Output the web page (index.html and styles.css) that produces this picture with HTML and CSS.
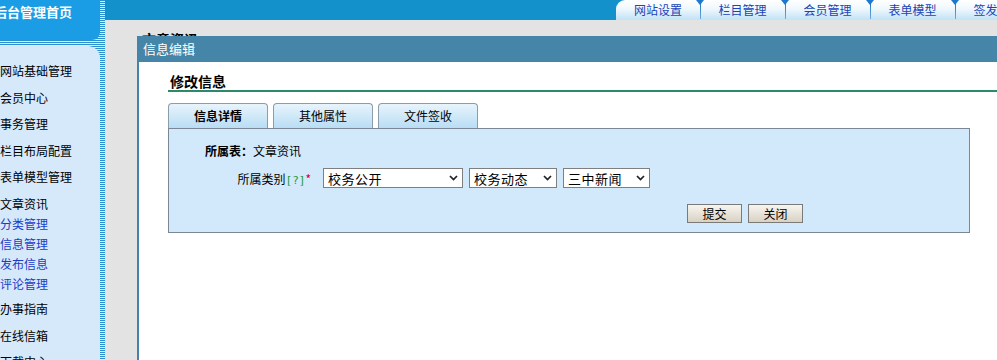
FILE: index.html
```html
<!DOCTYPE html>
<html lang="zh-CN">
<head>
    <meta charset="UTF-8">
    <title>信息编辑</title>
    <link rel="stylesheet" href="styles.css">
</head>
<body>
<div class="page">

    <!-- 左侧菜单 -->
    <aside class="side">
        <div class="side-head">后台管理首页</div>
        <ul class="side-menu">
            <li>网站基础管理</li>
            <li>会员中心</li>
            <li>事务管理</li>
            <li>栏目布局配置</li>
            <li>表单模型管理</li>
            <li>文章资讯
                <ul class="sub-menu">
                    <li><a href="#">分类管理</a></li>
                    <li><a href="#">信息管理</a></li>
                    <li><a href="#">发布信息</a></li>
                    <li><a href="#">评论管理</a></li>
                </ul>
            </li>
            <li>办事指南</li>
            <li>在线信箱</li>
            <li>下载中心</li>
        </ul>
    </aside>

    <!-- 主区域 -->
    <main class="main">
        <div class="topbar">
            <nav class="top-tabs">
                <a href="#">网站设置</a>
                <a href="#">栏目管理</a>
                <a href="#">会员管理</a>
                <a href="#">表单模型</a>
                <a href="#">签发管理</a>
            </nav>
        </div>
        <div class="content">
            <h2 class="content-title">文章资讯</h2>
        </div>

        <!-- 弹出窗口 -->
        <div class="dialog">
            <div class="dialog-head">信息编辑</div>
            <div class="dialog-body">
                <h3 class="form-title">修改信息</h3>
                <div class="form-tabs">
                    <span class="form-tab active">信息详情</span>
                    <span class="form-tab">其他属性</span>
                    <span class="form-tab">文件签收</span>
                </div>
                <form class="form-panel" action="#" method="post">
                    <div class="row row-table"><b>所属表：</b>文章资讯</div>
                    <div class="row row-select">
                        <label class="row-label">所属类别<span class="help">[?]</span><span class="req">*</span></label>
                        <span class="sel sel-1">
                            <select><option>校务公开</option></select>
                            <svg viewBox="0 0 9 6" width="9" height="6"><path d="M1 1 L4.5 4.6 L8 1" fill="none" stroke="#222" stroke-width="1.7"/></svg>
                        </span>
                        <span class="sel sel-2">
                            <select><option>校务动态</option></select>
                            <svg viewBox="0 0 9 6" width="9" height="6"><path d="M1 1 L4.5 4.6 L8 1" fill="none" stroke="#222" stroke-width="1.7"/></svg>
                        </span>
                        <span class="sel sel-3">
                            <select><option>三中新闻</option></select>
                            <svg viewBox="0 0 9 6" width="9" height="6"><path d="M1 1 L4.5 4.6 L8 1" fill="none" stroke="#222" stroke-width="1.7"/></svg>
                        </span>
                    </div>
                    <div class="row row-buttons">
                        <button type="submit" class="btn">提交</button>
                        <button type="button" class="btn">关闭</button>
                    </div>
                </form>
            </div>
        </div>
    </main>
</div>
</body>
</html>
```

FILE: styles.css
```css
body {
    margin: 0;
    font-family: "Noto Sans CJK SC", "DejaVu Sans", sans-serif;
    font-size: 12px;
    color: #000;
    overflow: hidden;
}

.page {
    display: flex;
    height: 360px;
}

/* 左侧菜单 */
.side {
    width: 105px;
    flex: none;
    display: flex;
    flex-direction: column;
    background: repeating-linear-gradient(to bottom, #2b8fd0 0 1px, #dcedf9 1px 2px);
}
.side-head {
    width: 100px;
    height: 40px;
    background: #1b9de6;
    border-bottom-right-radius: 8px;
    color: #fff;
    font-weight: bold;
    font-size: 13px;
    line-height: 24px;
    text-indent: -6px;
    white-space: nowrap;
    overflow: hidden;
}
.side-menu {
    width: 100px;
    flex: 1;
    margin: 6px 0 0;
    padding: 12px 0 0;
    list-style: none;
    background: #d6e9fb;
    border-top-right-radius: 12px;
    overflow: hidden;
}
.side-menu > li {
    line-height: 26.5px;
    white-space: nowrap;
}
.sub-menu {
    list-style: none;
    margin: -3px 0 2px;
    padding: 0;
}
.sub-menu li {
    line-height: 20px;
}
.sub-menu a {
    color: #1b3cc8;
    text-decoration: none;
}

/* 主区域 */
.main {
    flex: 1;
    position: relative;
    background: #e3e3e3;
    overflow: hidden;
}
.topbar {
    height: 20px;
    background: #1391cb;
    padding-left: 511px;
}
.top-tabs {
    display: flex;
    height: 20px;
}
.top-tabs a {
    position: relative;
    flex: none;
    width: 85px;
    height: 20px;
    line-height: 20px;
    text-align: center;
    color: #2043b6;
    text-decoration: none;
    background: linear-gradient(#ffffff, #f1f9fe 40%, #c2e2f6);
}
.top-tabs a:first-child {
    width: 84px;
    border-top-left-radius: 9px;
}
.top-tabs a + a::before {
    content: "";
    position: absolute;
    left: 0;
    top: 0;
    width: 1px;
    height: 19px;
    background: linear-gradient(#1a6cc0, #6aa9dc);
}
.top-tabs a + a::after {
    content: "";
    position: absolute;
    left: -4px;
    top: 0;
    border-top: 5px solid #1a78cf;
    border-left: 4.5px solid transparent;
    border-right: 4.5px solid transparent;
}

.content {
    padding: 11px 0 0 37px;
}
.content-title {
    margin: 0;
    font-size: 14px;
    line-height: 16px;
}

/* 弹出窗口 */
.dialog {
    position: absolute;
    left: 32px;
    top: 36px;
    bottom: 0;
    width: 900px;
    background: #fff;
    border-left: 2px solid #4584a8;
}
.dialog-head {
    height: 26px;
    line-height: 26px;
    padding-left: 4px;
    background: #4585a7;
    color: #fff;
    font-size: 13px;
}
.dialog-body {
    padding-left: 29px;
}
.form-title {
    margin: 10px 0 0;
    height: 18px;
    line-height: 18px;
    padding-left: 2px;
    font-size: 14px;
    border-bottom: 2px solid #2c8a6a;
}

.form-tabs {
    display: flex;
    gap: 5px;
    margin-top: 11px;
}
.form-tab {
    width: 98px;
    height: 24px;
    line-height: 24px;
    text-align: center;
    border: 1px solid #8b9cab;
    border-bottom: none;
    border-radius: 4px 4px 0 0;
    background: linear-gradient(#e8f4fc, #b9ddf5);
}
.form-tab.active {
    font-weight: bold;
}

.form-panel {
    width: 800px;
    margin: 0;
    padding: 12px 0 9px;
    background: #d2e8fb;
    border: 1px solid #7b8794;
}
.row-table {
    line-height: 20px;
    padding-left: 36px;
}
.row-select {
    display: flex;
    align-items: center;
    margin-top: 7px;
}
.row-label {
    width: 142px;
    text-align: right;
    margin-right: 12px;
}
.help {
    color: #1f9a3a;
    font-family: "DejaVu Sans Mono", monospace;
    font-size: 11px;
}
.req {
    color: #d0021b;
}
.sel {
    position: relative;
    margin-right: 6px;
}
.sel select {
    display: block;
    height: 20px;
    padding: 0 0 0 4px;
    border: 1px solid #7f7f7f;
    border-radius: 0;
    background: #fff;
    font-family: inherit;
    font-size: 13px;
    color: #000;
    letter-spacing: 0.5px;
    appearance: none;
    -webkit-appearance: none;
}
.sel-1 select { width: 140px; }
.sel-2 select { width: 88px; }
.sel-3 select { width: 87px; }
.sel svg {
    position: absolute;
    right: 5px;
    top: 7px;
}

.row-buttons {
    display: flex;
    gap: 6px;
    margin-top: 16px;
    padding-left: 518px;
}
.btn {
    width: 55px;
    height: 19px;
    padding: 0;
    border: 1px solid #7a7a7a;
    background: linear-gradient(#f7f5f0, #d8d2c3);
    font-family: inherit;
    font-size: 12px;
    line-height: 17px;
    color: #000;
}
```
